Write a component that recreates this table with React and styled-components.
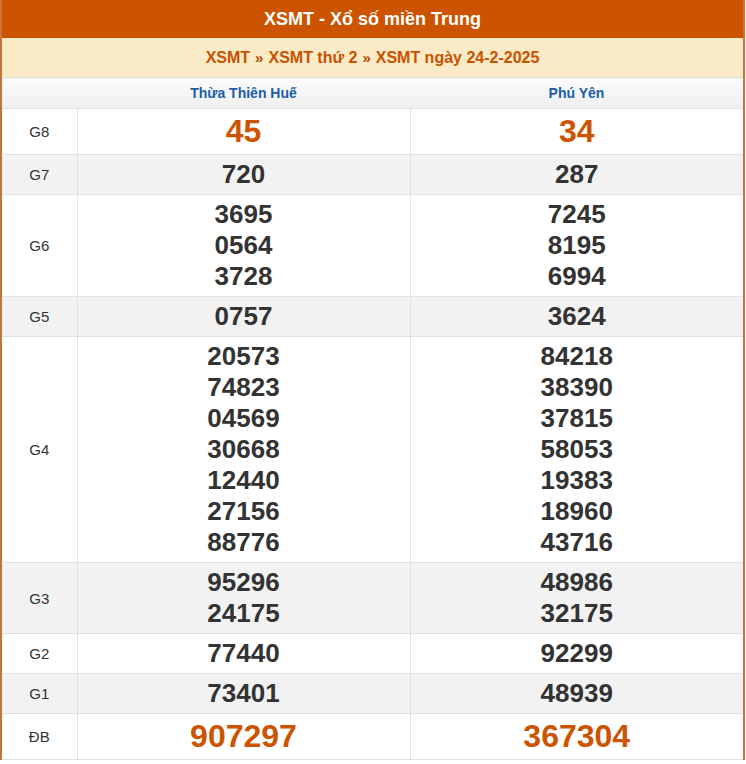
import React from "react";
import styled, { createGlobalStyle } from "styled-components";

const Global = createGlobalStyle`
  html, body { margin: 0; padding: 0; background: #fff; }
  body { font-family: "Liberation Sans", Arial, sans-serif; }
`;

const Box = styled.div`
  width: 745px;
  box-sizing: border-box;
  border-left: 2px solid #c8733a;
  border-right: 2px solid #c8733a;
`;

const Title = styled.h2`
  margin: 0;
  height: 38px;
  background: #cc5400;
  color: #fff;
  font-size: 18px;
  font-weight: bold;
  display: flex;
  align-items: center;
  justify-content: center;
`;

const Crumbs = styled.div`
  height: 39px;
  background: #faeac6;
  color: #c75300;
  font-size: 16px;
  font-weight: bold;
  display: flex;
  align-items: center;
  justify-content: center;
  gap: 5px;
`;

const Sep = styled.span`
  color: #b34a00;
  font-size: 15px;
`;

const Table = styled.table`
  width: 100%;
  border-collapse: collapse;
  table-layout: fixed;
`;

const HeadCell = styled.th`
  height: 30px;
  padding: 0;
  background: linear-gradient(#fbfbfb, #efefef);
  color: #1a5ea8;
  font-size: 14px;
  font-weight: bold;
  border-top: 1px solid #dedede;
  border-bottom: 1px solid #e2e2e2;
`;

const Row = styled.tr`
  background: ${(p) => (p.$alt ? "#f2f2f2" : "#fff")};
`;

const Label = styled.td`
  padding: 0;
  text-align: center;
  font-size: 15px;
  color: #333;
  border: 1px solid #e2e2e2;
  border-left: none;
`;

const Cell = styled.td`
  padding: 4px 0;
  text-align: center;
  border: 1px solid #e2e2e2;
  &:last-child { border-right: none; }
`;

const Num = styled.div`
  font-weight: bold;
  font-size: ${(p) => (p.$big ? "32px" : "26px")};
  line-height: ${(p) => (p.$big ? "37px" : "31px")};
  color: ${(p) => (p.$big ? "#cc5400" : "#333")};
`;

const rows = [
  { g: "G8", a: ["45"], b: ["34"], big: true },
  { g: "G7", a: ["720"], b: ["287"] },
  { g: "G6", a: ["3695", "0564", "3728"], b: ["7245", "8195", "6994"] },
  { g: "G5", a: ["0757"], b: ["3624"] },
  {
    g: "G4",
    a: ["20573", "74823", "04569", "30668", "12440", "27156", "88776"],
    b: ["84218", "38390", "37815", "58053", "19383", "18960", "43716"],
  },
  { g: "G3", a: ["95296", "24175"], b: ["48986", "32175"] },
  { g: "G2", a: ["77440"], b: ["92299"] },
  { g: "G1", a: ["73401"], b: ["48939"] },
  { g: "ĐB", a: ["907297"], b: ["367304"], big: true },
];

export default function App() {
  return (
    <>
      <Global />
      <Box>
        <Title>XSMT - Xổ số miền Trung</Title>
        <Crumbs>
          <span>XSMT</span>
          <Sep>»</Sep>
          <span>XSMT thứ 2</span>
          <Sep>»</Sep>
          <span>XSMT ngày 24-2-2025</span>
        </Crumbs>
        <Table>
          <colgroup>
            <col style={{ width: 75 }} />
            <col />
            <col />
          </colgroup>
          <thead>
            <tr>
              <HeadCell />
              <HeadCell>Thừa Thiên Huế</HeadCell>
              <HeadCell>Phú Yên</HeadCell>
            </tr>
          </thead>
          <tbody>
            {rows.map((r, i) => (
              <Row key={r.g} $alt={i % 2 === 1}>
                <Label>{r.g}</Label>
                <Cell>
                  {r.a.map((n, j) => (
                    <Num key={j} $big={r.big}>{n}</Num>
                  ))}
                </Cell>
                <Cell>
                  {r.b.map((n, j) => (
                    <Num key={j} $big={r.big}>{n}</Num>
                  ))}
                </Cell>
              </Row>
            ))}
          </tbody>
        </Table>
      </Box>
    </>
  );
}
